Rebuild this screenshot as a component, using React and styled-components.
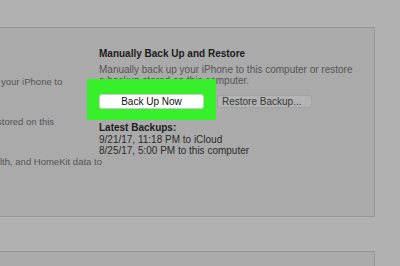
import React from 'react'
import styled, { createGlobalStyle } from 'styled-components'

const GlobalStyle = createGlobalStyle`
  html, body {
    margin: 0;
    padding: 0;
    background-color: #b1b1b1;
    font-family: "Liberation Sans", Arial, sans-serif;
  }
`

const Page = styled.div`
  width: 400px;
  height: 266px;
  overflow: hidden;
  background-color: #b1b1b1;
`

const TopArea = styled.div`
  height: 27px;
`

const Panel = styled.div`
  width: 375px;
  height: ${(p) => p.height}px;
  box-sizing: border-box;
  background-color: #aaaaaa;
  border-top: 1px solid #969696;
  border-right: 1px solid #999999;
  border-bottom: ${(p) => (p.open ? 'none' : '1px solid #969696')};
  display: flex;
`

const Gap = styled.div`
  height: 34px;
`

const LeftColumn = styled.div`
  width: 95px;
  flex-shrink: 0;
  padding-top: 48px;
  display: flex;
  flex-direction: column;
`

const SideLine = styled.div`
  white-space: nowrap;
  font-size: 9.5px;
  line-height: 12px;
  color: #555555;
  margin-left: ${(p) => p.shift || 0}px;
  margin-bottom: ${(p) => p.after || 0}px;
`

const RightColumn = styled.div`
  position: relative;
  padding-top: 20px;
  padding-left: 4px;
  display: flex;
  flex-direction: column;
`

const Heading = styled.div`
  font-size: 10px;
  font-weight: bold;
  line-height: 12px;
  color: #1c1c1c;
  margin-bottom: ${(p) => p.after || 0}px;
`

const Text = styled.div`
  font-size: 10px;
  line-height: 11px;
  color: ${(p) => (p.dark ? '#2a2a2a' : '#555555')};
  white-space: nowrap;
`

const ButtonRow = styled.div`
  display: flex;
  align-items: center;
  gap: 13px;
  margin-top: 8px;
  margin-bottom: 13px;
`

const Button = styled.div`
  box-sizing: border-box;
  height: ${(p) => (p.primary ? 15 : 13)}px;
  width: ${(p) => (p.primary ? 105 : 95)}px;
  padding-left: ${(p) => (p.primary ? 0 : 4)}px;
  border-radius: 3px;
  border: 1px solid ${(p) => (p.primary ? '#c9c9c9' : '#a2a2a2')};
  background-color: ${(p) => (p.primary ? '#ffffff' : '#b3b3b3')};
  color: ${(p) => (p.primary ? '#111111' : '#3a3a3a')};
  font-size: 10px;
  line-height: ${(p) => (p.primary ? 13 : 11)}px;
  text-align: ${(p) => (p.primary ? 'center' : 'left')};
  position: relative;
  z-index: 1;
`

const Highlight = styled.div`
  position: absolute;
  left: -8px;
  top: 51px;
  width: 129px;
  height: 41px;
  background-color: #37f02b;
`

export default function App() {
  return (
    <Page>
      <GlobalStyle />
      <TopArea />
      <Panel height={190}>
        <LeftColumn>
          <SideLine shift={1} after={28}>your iPhone to</SideLine>
          <SideLine shift={-3} after={28}>stored on this</SideLine>
          <SideLine>lth, and HomeKit data to</SideLine>
        </LeftColumn>
        <RightColumn>
          <Heading after={4}>Manually Back Up and Restore</Heading>
          <Text>Manually back up your iPhone to this computer or restore</Text>
          <Text>a backup stored on this computer.</Text>
          <Highlight />
          <ButtonRow>
            <Button primary>Back Up Now</Button>
            <Button>Restore Backup...</Button>
          </ButtonRow>
          <Heading>Latest Backups:</Heading>
          <Text dark>9/21/17, 11:18 PM to iCloud</Text>
          <Text dark>8/25/17, 5:00 PM to this computer</Text>
        </RightColumn>
      </Panel>
      <Gap />
      <Panel height={40} open />
    </Page>
  )
}
